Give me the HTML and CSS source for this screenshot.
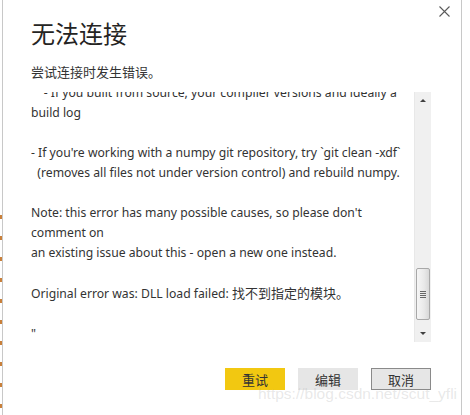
FILE: index.html
```html
<!DOCTYPE html>
<html lang="zh-CN">
<head>
  <meta charset="UTF-8">
  <meta name="viewport" content="width=device-width, initial-scale=1.0">
  <title>无法连接</title>
  <link rel="stylesheet" href="styles.css">
</head>
<body>
  <div class="page">
    <div class="edge"><div class="edge-marks"></div></div>

    <div class="dialog">
      <button class="close" aria-label="关闭">
        <svg width="11" height="11" viewBox="0 0 11 11">
          <path d="M0.5 0.5 L10.5 10.5 M10.5 0.5 L0.5 10.5" stroke="#5a5a5a" stroke-width="1.1" fill="none"/>
        </svg>
      </button>

      <h1 class="dialog-title">无法连接</h1>
      <p class="dialog-subtitle">尝试连接时发生错误。</p>

      <div class="details">
        <div class="details-view">
<pre class="details-text">    - If you built from source, your compiler versions and ideally a
build log

- If you're working with a numpy git repository, try `git clean -xdf`
  (removes all files not under version control) and rebuild numpy.

Note: this error has many possible causes, so please don't
comment on
an existing issue about this - open a new one instead.

Original error was: DLL load failed: <span class="cjk">找不到指定的模块。</span>

"</pre>
        </div>
        <div class="scrollbar">
          <div class="scroll-arrow up"></div>
          <div class="scroll-track">
            <div class="scroll-thumb">
              <span class="grip"></span>
            </div>
          </div>
          <div class="scroll-arrow down"></div>
        </div>
      </div>

      <div class="actions">
        <button class="btn btn-primary">重试</button>
        <button class="btn">编辑</button>
        <button class="btn btn-focus">取消</button>
      </div>
    </div>
  </div>

  <div class="watermark">https://blog.csdn.net/scut_yfli</div>
</body>
</html>
```

FILE: styles.css
```css
html, body {
    margin: 0;
    height: 100%;
    background: #ffffff;
}

body {
    font-family: "Noto Sans", "Noto Sans CJK SC", sans-serif;
    color: #333333;
    overflow: hidden;
    position: relative;
}

.page {
    display: flex;
    height: 415px;
}

/* leftover bits of the window behind the dialog */
.edge {
    width: 2px;
    padding-top: 215px;
    box-sizing: border-box;
}

.edge-marks {
    height: 200px;
    background: repeating-linear-gradient(to bottom, #c9803a 0 4px, transparent 4px 21px);
}

.dialog {
    position: relative;
    width: 460px;
    box-sizing: border-box;
    border-left: 1px solid #c8c8c8;
    border-right: 1px solid #c8c8c8;
    padding: 17px 30px 0 28px;
    background: #ffffff;
}

.close {
    position: absolute;
    top: 6px;
    right: 11px;
    padding: 0;
    border: 0;
    background: none;
    width: 11px;
    height: 11px;
    display: flex;
}

.dialog-title {
    margin: 0;
    font-family: "Noto Sans CJK SC", sans-serif;
    font-weight: normal;
    font-size: 24px;
    line-height: 32px;
    color: #252423;
}

.dialog-subtitle {
    margin: 13px 0 0;
    font-family: "Noto Sans CJK SC", sans-serif;
    font-size: 13px;
    line-height: 20px;
    color: #333333;
}

.details {
    display: flex;
    margin-top: 10px;
    height: 250px;
}

.details-view {
    flex: 1;
    overflow: hidden;
}

.details-text {
    margin: -9px 0 0;
    font-family: "Noto Sans", "Noto Sans CJK SC", sans-serif;
    font-size: 12.2px;
    line-height: 20px;
    color: #333333;
    white-space: pre;
}

.details-text .cjk {
    font-family: "Noto Sans CJK SC", sans-serif;
    font-size: 13px;
}

.scrollbar {
    width: 17px;
    display: flex;
    flex-direction: column;
    background: #f0f0f0;
    border-left: 1px solid #e8e8e8;
    box-sizing: border-box;
}

.scroll-arrow {
    height: 17px;
    display: flex;
    align-items: center;
    justify-content: center;
}

.scroll-arrow::before {
    content: "";
    border-left: 3px solid transparent;
    border-right: 3px solid transparent;
}

.scroll-arrow.up::before {
    border-bottom: 3px solid #404040;
}

.scroll-arrow.down::before {
    border-top: 3px solid #404040;
}

.scroll-track {
    flex: 1;
    display: flex;
    flex-direction: column;
    justify-content: flex-end;
    padding: 0 1px 5px 1px;
}

.scroll-thumb {
    height: 50px;
    border: 1px solid #a8a8a8;
    border-radius: 2px;
    background: linear-gradient(to right, #f6f6f6, #e8e8e8 60%, #d8d8d8);
    display: flex;
    align-items: center;
    justify-content: center;
}

.grip {
    width: 6px;
    height: 7px;
    background: repeating-linear-gradient(to bottom, #666 0 1px, transparent 1px 2px);
}

.actions {
    display: flex;
    justify-content: flex-end;
    gap: 13px;
    margin-top: 26px;
}

.btn {
    width: 60px;
    height: 22px;
    padding: 0;
    border: 0;
    background: #e6e6e6;
    font-family: "Noto Sans CJK SC", sans-serif;
    font-size: 13px;
    color: #333333;
    box-sizing: border-box;
}

.btn-primary {
    background: #f2c811;
}

.btn-focus {
    border: 1px solid #8a8a8a;
}

.watermark {
    position: absolute;
    left: 258px;
    top: 385px;
    font-family: "Liberation Sans", sans-serif;
    font-size: 15.5px;
    color: rgba(180, 180, 180, 0.3);
    white-space: nowrap;
    pointer-events: none;
}
```
